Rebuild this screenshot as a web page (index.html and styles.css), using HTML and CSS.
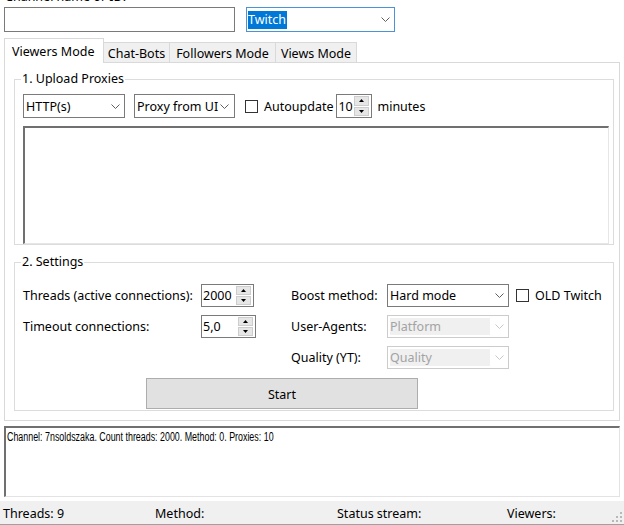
FILE: index.html
```html
<!DOCTYPE html>
<html>
<head>
<meta charset="utf-8">
<title>Viewers Mode</title>
<link rel="stylesheet" href="styles.css">
</head>
<body>
<div class="app">
  <div class="chan-label"><span>Channel name or ID:</span></div>
  <div class="top-row">
    <div class="textbox"></div>
    <div class="combo focused w149"><span class="txt"><span class="sel">Twitch</span></span><span class="arrow"><svg width="9" height="5" viewBox="0 0 9 5"><polyline points="0.5,0.5 4.5,4.5 8.5,0.5" fill="none" stroke="#606060" stroke-width="1"/></svg></span></div>
  </div>
  <div class="tabs">
    <div class="tab active">Viewers Mode</div>
    <div class="tab t66">Chat-Bots</div>
    <div class="tab t106">Followers Mode</div>
    <div class="tab t81">Views Mode</div>
  </div>
  <div class="panel">
    <fieldset class="group g1">
      <legend>1. Upload Proxies</legend>
      <div class="proxy-row">
        <div class="combo w102"><span class="txt">HTTP(s)</span><span class="arrow"><svg width="9" height="5" viewBox="0 0 9 5"><polyline points="0.5,0.5 4.5,4.5 8.5,0.5" fill="none" stroke="#606060" stroke-width="1"/></svg></span></div>
        <div class="combo w101 tight ml9"><span class="txt">Proxy from UI</span><span class="arrow"><svg width="9" height="5" viewBox="0 0 9 5"><polyline points="0.5,0.5 4.5,4.5 8.5,0.5" fill="none" stroke="#606060" stroke-width="1"/></svg></span></div>
        <span class="check ml10"></span>
        <span class="ml6">Autoupdate</span>
        <div class="spin w36 ml3"><span class="val">10</span><span class="btns"><i><svg width="5" height="3" viewBox="0 0 5 3"><polygon points="0,3 2.5,0 5,3" fill="#000"/></svg></i><i><svg width="5" height="3" viewBox="0 0 5 3"><polygon points="0,0 2.5,3 5,0" fill="#000"/></svg></i></span></div>
        <span class="ml5">minutes</span>
      </div>
      <div class="proxy-box"></div>
    </fieldset>
    <fieldset class="group g2">
      <legend>2. Settings</legend>
      <div class="settings">
        <span>Threads (active connections):</span>
        <div class="spin w53"><span class="val">2000</span><span class="btns"><i><svg width="5" height="3" viewBox="0 0 5 3"><polygon points="0,3 2.5,0 5,3" fill="#000"/></svg></i><i><svg width="5" height="3" viewBox="0 0 5 3"><polygon points="0,0 2.5,3 5,0" fill="#000"/></svg></i></span></div>
        <span>Boost method:</span>
        <div class="combo w122"><span class="txt">Hard mode</span><span class="arrow"><svg width="9" height="5" viewBox="0 0 9 5"><polyline points="0.5,0.5 4.5,4.5 8.5,0.5" fill="none" stroke="#606060" stroke-width="1"/></svg></span></div>
        <div class="checkline"><span class="check"></span><span class="ml6">OLD Twitch</span></div>

        <span>Timeout connections:</span>
        <div class="spin w55"><span class="val">5,0</span><span class="btns"><i><svg width="5" height="3" viewBox="0 0 5 3"><polygon points="0,3 2.5,0 5,3" fill="#000"/></svg></i><i><svg width="5" height="3" viewBox="0 0 5 3"><polygon points="0,0 2.5,3 5,0" fill="#000"/></svg></i></span></div>
        <span>User-Agents:</span>
        <div class="combo disabled w122"><span class="txt">Platform</span><span class="arrow"><svg width="9" height="5" viewBox="0 0 9 5"><polyline points="0.5,0.5 4.5,4.5 8.5,0.5" fill="none" stroke="#c8c8c8" stroke-width="1"/></svg></span></div>
        <span></span>

        <span></span>
        <span></span>
        <span>Quality (YT):</span>
        <div class="combo disabled w122"><span class="txt">Quality</span><span class="arrow"><svg width="9" height="5" viewBox="0 0 9 5"><polyline points="0.5,0.5 4.5,4.5 8.5,0.5" fill="none" stroke="#c8c8c8" stroke-width="1"/></svg></span></div>
        <span></span>
      </div>
      <button class="start">Start</button>
    </fieldset>
  </div>
  <div class="log"><span class="log-line">Channel: 7nsoldszaka. Count threads: 2000. Method: 0. Proxies: 10</span></div>
  <div class="status">
    <span>Threads: 9</span>
    <span>Method:</span>
    <span>Status stream:</span>
    <span>Viewers:</span>
    <svg class="grip" width="10" height="10" viewBox="0 0 10 10">
      <rect x="8" y="0" width="2" height="2" fill="#b8b8b8"/>
      <rect x="4" y="4" width="2" height="2" fill="#b8b8b8"/>
      <rect x="8" y="4" width="2" height="2" fill="#b8b8b8"/>
      <rect x="0" y="8" width="2" height="2" fill="#b8b8b8"/>
      <rect x="4" y="8" width="2" height="2" fill="#b8b8b8"/>
      <rect x="8" y="8" width="2" height="2" fill="#b8b8b8"/>
    </svg>
  </div>
</div>
</body>
</html>
```
FILE: styles.css
```css
* { box-sizing: border-box; }
html, body { margin: 0; padding: 0; }
body {
  width: 624px;
  height: 525px;
  overflow: hidden;
  background: #ffffff;
  font-family: "Noto Sans", "Segoe UI", sans-serif;
  font-size: 12.5px;
  color: #000;
}
.app { display: flex; flex-direction: column; height: 525px; }
.app > * { flex-shrink: 0; }

.chan-label { height: 7px; overflow: hidden; padding-left: 5px; }
.chan-label span { display: block; line-height: 16px; margin-top: -11px; }

.top-row { display: flex; padding-left: 4px; height: 25px; }
.textbox { width: 231px; height: 25px; border: 1px solid #7a7a7a; background: #fff; }
.top-row .combo { height: 25px; margin-left: 11px; }

.combo {
  display: flex;
  align-items: stretch;
  height: 24px;
  border: 1px solid #7a7a7a;
  background: #fff;
}
.combo .txt { flex: 1; display: flex; align-items: center; padding-left: 2px; white-space: nowrap; overflow: hidden; }
.combo .arrow { width: 18px; display: flex; align-items: center; justify-content: center; flex-shrink: 0; }
.combo.tight .txt { padding-left: 2px; overflow: visible; }
.combo.tight .arrow { width: 14px; justify-content: flex-start; }
.combo.focused { border-color: #4b93d6; }
.combo .sel { background: #0078d7; color: #fff; line-height: 18px; padding: 0 1px 0 0; }
.combo.focused .txt { padding-left: 1px; }
.combo.disabled { border-color: #cccccc; }
.combo.disabled .txt { background: #f0f0f0; color: #a3a3a3; margin: 2px 0 2px 2px; padding-left: 0; }
.w149 { width: 149px; }
.w102 { width: 102px; }
.w101 { width: 101px; }
.w122 { width: 122px; height: 23px; }

.tabs { display: flex; align-items: flex-end; height: 25px; margin-top: 6px; padding-left: 4px; margin-bottom: -1px; }
.tab {
  height: 21px;
  border: 1px solid #d9d9d9;
  border-left: none;
  background: #f0f0f0;
  display: flex;
  align-items: center;
  justify-content: center;
  white-space: nowrap;
  padding-top: 1px;
}
.tab.active {
  width: 100px;
  height: 25px;
  background: #fff;
  border-left: 1px solid #d9d9d9;
  border-bottom: none;
  position: relative;
  z-index: 1;
  justify-content: flex-start;
  padding-left: 7px;
  padding-top: 0;
}
.t66 { width: 66px; }
.t106 { width: 106px; }
.t81 { width: 81px; }

.panel {
  margin: 0 4px;
  height: 359px;
  border: 1px solid #d9d9d9;
  padding: 8px 5px 8px 9px;
  background: #fff;
}

.group {
  margin: 0;
  min-width: 0;
  border: 1px solid #dcdcdc;
  padding: 0 4px 0 8px;
}
.group legend { padding: 0 1px; margin-left: -2px; line-height: 16px; }

.proxy-row { display: flex; align-items: center; height: 24px; margin-top: 7px; white-space: nowrap; }
.ml3 { margin-left: 3px; }
.ml5 { margin-left: 5px; }
.ml6 { margin-left: 6px; }
.ml9 { margin-left: 9px; }
.ml10 { margin-left: 10px; }

.check { display: inline-block; width: 13px; height: 13px; border: 1px solid #333; background: #fff; flex-shrink: 0; }

.spin { display: flex; height: 24px; border: 1px solid #7a7a7a; background: #fff; }
.spin .val { flex: 1; display: flex; align-items: center; padding-left: 1px; }
.spin .btns { width: 17px; display: flex; flex-direction: column; padding: 1px 2px 1px 0; gap: 1px; }
.spin .btns i {
  flex: 1;
  display: flex;
  align-items: center;
  justify-content: center;
  background: #e6e6e6;
  border: 1px solid #cdcdcd;
}
.w36 { width: 36px; }
.w53 { width: 53px; height: 23px; }
.w55 { width: 55px; height: 23px; }

.proxy-box {
  margin-top: 8px;
  height: 118px;
  border-top: 2px solid #707070;
  border-left: 2px solid #707070;
  border-right: 1px solid #e6e6e6;
  border-bottom: 1px solid #e6e6e6;
  background: #fff;
}

.g2 { margin-top: 9px; padding-bottom: 1px; }
.settings {
  display: grid;
  grid-template-columns: 178px 90px 96px 122px auto;
  grid-auto-rows: 23px;
  row-gap: 8px;
  align-items: center;
  margin-top: 14px;
  white-space: nowrap;
}
.checkline { display: flex; align-items: center; padding-left: 7px; }

.start {
  display: block;
  margin: 9px 0 0 123px;
  width: 272px;
  height: 31px;
  border: 1px solid #adadad;
  background: #e1e1e1;
  font-family: inherit;
  font-size: 12.5px;
  color: #000;
  padding: 1px 0 0;
}

.log {
  margin: 5px 4px 0;
  height: 71px;
  border-top: 2px solid #707070;
  border-left: 2px solid #707070;
  border-right: 1px solid #e3e3e3;
  border-bottom: 1px solid #e3e3e3;
  padding: 2px 0 0 1px;
  font-family: "Liberation Sans", Arial, sans-serif;
  font-size: 12px;
  line-height: 15px;
  background: #fff;
  overflow: hidden;
}
.log-line {
  display: inline-block;
  white-space: nowrap;
  transform: scaleX(0.74);
  transform-origin: left center;
}

.status {
  margin-top: 4px;
  height: 24px;
  display: grid;
  grid-template-columns: 152px 182px 170px 1fr 12px;
  align-items: center;
  padding-left: 3px;
  padding-top: 1px;
  background: #f0f0f0;
  border-bottom: 1px solid #a0a0a0;
  white-space: nowrap;
}
.grip { align-self: end; margin-bottom: 2px; }
```
